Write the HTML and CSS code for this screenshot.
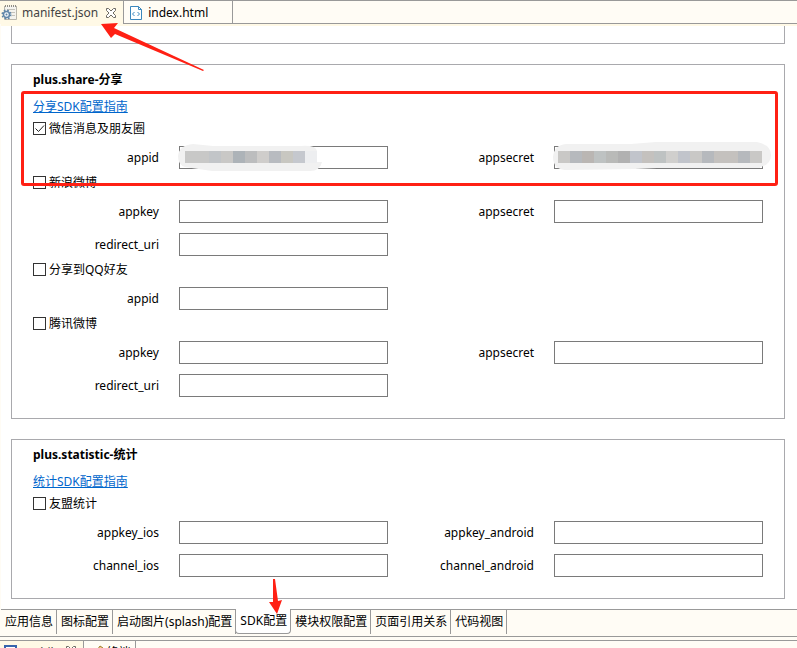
FILE: index.html
```html
<!DOCTYPE html>
<html lang="zh-CN">
<head>
<meta charset="utf-8">
<title>manifest.json</title>
<link rel="stylesheet" href="styles.css">
</head>
<body>
<div class="editor">
  <nav class="file-tabs">
    <button class="file-tab active" type="button">
      <svg class="file-icon" width="18" height="18" viewBox="0 0 18 18"><path d="M4.500 2v13.500h12V2" fill="#f4f3ee" stroke="#b9b6ab"/><path d="M5 2h11" stroke="#8f8d86" stroke-width="2" stroke-dasharray="1 1"/><path d="M7 5.500h8M11 8.500h4M12 11.500h3" stroke="#c4c2ba" fill="none"/><circle cx="6.500" cy="10.500" r="3" fill="#f4f8fa" stroke="#5f86a8" stroke-width="1.500"/><circle cx="6.500" cy="10.500" r="4.300" fill="none" stroke="#5f86a8" stroke-width="1.500" stroke-dasharray="1.700 1.700"/><circle cx="6.500" cy="10.500" r="1" fill="#5f86a8"/></svg>
      <span>manifest.json</span>
      <svg class="close-icon" width="12" height="12" viewBox="0 0 12 12"><path d="M1.500 1.500h2L6 4l2.500-2.500h2v2L8 6l2.500 2.500v2h-2L6 8l-2.500 2.500h-2v-2L4 6 1.500 3.500z" fill="#fff" stroke="#6c6a63"/></svg>
    </button>
    <button class="file-tab" type="button">
      <svg class="html-icon" width="12" height="14" viewBox="0 0 12 14"><path d="M.5.500h8l3 3v10H.5z" fill="#fff" stroke="#3b87bd"/><path d="M8.500.500v3h3M4.500 6 2.500 8l2 2M7.500 6l2 2-2 2" fill="none" stroke="#3b87bd"/></svg>
      <span>index.html</span>
    </button>
  </nav>

  <main class="page">
    <section class="group previous"></section>

    <section class="group">
      <h2>plus.share-分享</h2>
      <a class="guide" href="#share">分享SDK配置指南</a>
      <label class="check"><input type="checkbox" checked>微信消息及朋友圈</label>
      <div class="fields">
        <label for="wx-id">appid</label>
        <div class="control"><input id="wx-id" type="text">
          <svg class="smudge" width="146" height="30" viewBox="0 0 146 30"><path d="M1 14Q2 3 16 2l20 2h88q15-1 16 5v11h5q-2 9-12 9H35L8 25Q1 23 1 14z" fill="#f1f1f1"/><path d="M8 9h24v12H8z" fill="#c8c8c7"/><path d="M32 9h12v12H32z" fill="#c2c5c8"/><path d="M44 9h12v12H44z" fill="#c9c8c6"/><path d="M56 9h12v12H56z" fill="#adb3b8"/><path d="M68 9h12v12H68z" fill="#bcbdbe"/><path d="M80 9h12v12H80z" fill="#cfcdcb"/><path d="M92 9h12v12H92z" fill="#b8bbc0"/><path d="M104 9h12v12h-12z" fill="#c8c7c1"/><path d="M116 9h12v12h-12z" fill="#c5c8ce"/><path d="M128 9h12v12h-12z" fill="#edeef0"/></svg>
        </div>
        <label for="wx-secret">appsecret</label>
        <div class="control"><input id="wx-secret" type="text">
          <svg class="smudge" width="220" height="30" viewBox="0 0 220 30"><path d="M1 15Q2 3 14 2h65l25-2 92-1q23 1 23 14 0 10-11 12v1H105l-22 1-70 1Q1 27 1 15z" fill="#f1f1f1"/><path d="M6 9h12v12H6zM138 9h12v12h-12zM198 9h12v12h-12z" fill="#c9c8c6"/><path d="M18 9h12v12H18zM150 9h12v12h-12zM186 9h12v12h-12z" fill="#b6b9bd"/><path d="M30 9h12v12H30z" fill="#bab6b3"/><path d="M42 9h12v12H42zM102 9h12v12h-12z" fill="#bec2c2"/><path d="M54 9h12v12H54z" fill="#b9bab8"/><path d="M66 9h12v12H66z" fill="#b1b1b1"/><path d="M78 9h12v12H78zM126 9h12v12h-12z" fill="#c1c4cb"/><path d="M90 9h12v12H90zM162 9h24v12h-24z" fill="#c4c1be"/><path d="M114 9h12v12h-12z" fill="#d0cfcd"/></svg>
        </div>
      </div>
      <label class="check"><input type="checkbox">新浪微博</label>
      <div class="fields">
        <label for="sina-key">appkey</label><input id="sina-key" type="text">
        <label for="sina-secret">appsecret</label><input id="sina-secret" type="text">
        <label for="sina-uri">redirect_uri</label><input id="sina-uri" type="text">
      </div>
      <label class="check"><input type="checkbox">分享到QQ好友</label>
      <div class="fields">
        <label for="qq-id">appid</label><input id="qq-id" type="text">
      </div>
      <label class="check"><input type="checkbox">腾讯微博</label>
      <div class="fields">
        <label for="tx-key">appkey</label><input id="tx-key" type="text">
        <label for="tx-secret">appsecret</label><input id="tx-secret" type="text">
        <label for="tx-uri">redirect_uri</label><input id="tx-uri" type="text">
      </div>
      <div class="highlight"></div>
    </section>

    <section class="group">
      <h2>plus.statistic-统计</h2>
      <a class="guide" href="#statistic">统计SDK配置指南</a>
      <label class="check"><input type="checkbox">友盟统计</label>
      <div class="fields">
        <label for="key-ios">appkey_ios</label><input id="key-ios" type="text">
        <label for="key-android">appkey_android</label><input id="key-android" type="text">
        <label for="channel-ios">channel_ios</label><input id="channel-ios" type="text">
        <label for="channel-android">channel_android</label><input id="channel-android" type="text">
      </div>
    </section>
  </main>

  <nav class="page-tabs">
    <button type="button">应用信息</button>
    <button type="button">图标配置</button>
    <button type="button">启动图片(splash)配置</button>
    <button type="button" class="active">SDK配置
      <svg class="arrow-down" width="14" height="36" viewBox="0 0 14 36"><path d="M5 0h2l3 22 4-1-5 14L1 23l4 0z" fill="#ff2014"/></svg>
    </button>
    <button type="button">模块权限配置</button>
    <button type="button">页面引用关系</button>
    <button type="button">代码视图</button>
  </nav>
  <svg class="arrow-tab" width="104" height="50" viewBox="0 0 104 50"><path d="M0 1 17 0l-4 5 90 42-1 1L14 11l-4 4z" fill="#ff2014"/></svg>
</div>
<div class="dock">
  <button class="dock-tab active" type="button"><svg width="13" height="12" viewBox="0 0 13 12"><path d="M1 1h11v10H1z" fill="#fff" stroke="#3764ac" stroke-width="2"/></svg><span>Mobile</span><svg class="close-icon" width="12" height="12" viewBox="0 0 12 12"><path d="M1.500 1.500h2L6 4l2.500-2.500h2v2L8 6l2.500 2.500v2h-2L6 8l-2.500 2.500h-2v-2L4 6 1.500 3.500z" fill="#fff" stroke="#6c6a63"/></svg></button>
  <button class="dock-tab second" type="button"><svg width="10" height="12" viewBox="0 0 10 12"><path d="M1 8 6 1l3 2-5 8z" fill="#f2cf7c" stroke="#a17b34"/></svg><span>终端</span></button>
</div>
</body>
</html>
```
FILE: styles.css
```css
* { box-sizing: border-box; }
body {
  margin: 0;
  height: 100vh;
  overflow: hidden;
  background: #fffcf5;
  color: #000;
  font: 12px/16px "Noto Sans", "Noto Sans CJK SC", sans-serif;
}
button {
  font: inherit;
  color: inherit;
  background: none;
  border: 0;
  padding: 0;
  white-space: nowrap;
}
.editor { position: relative; border-bottom: 1px solid #999; }
.file-tabs {
  display: flex;
  height: 24px;
  border-top: 1px solid #999;
  border-bottom: 1px solid #999;
}
.file-tab {
  display: flex;
  align-items: center;
  gap: 6px;
  padding: 1px 24px 0 6px;
  border-right: 1px solid #999;
}
.file-tab.active {
  height: 23px;
  gap: 7px;
  padding: 0 6px 0 0;
  background: #fff9e6;
  color: #444;
}
.file-icon { margin-right: -3px; }
.page {
  margin-left: 1px;
  padding: 0 12px 10px 10px;
  border-top: 2px solid #fff9e6;
  background: #fff;
}
.group {
  position: relative;
  margin-bottom: 20px;
  padding: 5px 21px 21px;
  border: 1px solid #a9a9ad;
}
.group:last-child { margin-bottom: 0; }
.group.previous { padding: 0; height: 18px; border-top: 0; }
h2 { margin: 0 0 9px; font-size: 12px; line-height: 20px; font-weight: 700; }
.guide { display: block; width: max-content; margin-bottom: 5px; color: #0066cc; }
.check { display: flex; align-items: center; gap: 3px; width: max-content; height: 17px; }
.check input {
  appearance: none;
  width: 13px;
  height: 13px;
  margin: 0;
  border: 1px solid #333;
  background: #fff;
}
.check input:checked {
  background: #fff url("data:image/svg+xml,%3Csvg xmlns='http://www.w3.org/2000/svg' viewBox='0 0 11 11'%3E%3Cpath d='M1.500 5.500 4.500 8.500 10 2.500' fill='none' stroke='%23222'/%3E%3C/svg%3E");
}
.fields {
  display: grid;
  grid-template-columns: 126px 1fr 126px 1fr;
  gap: 10px 20px;
  align-items: center;
  margin: 9px 0 5px;
}
.fields:last-child, .fields:nth-last-child(2) { margin-bottom: 0; }
.fields label { text-align: right; }
.fields input {
  display: block;
  width: 100%;
  min-width: 0;
  height: 23px;
  border: 1px solid #7a7a7a;
  background: #fff;
  font: inherit;
}
.control { position: relative; }
.smudge { position: absolute; left: -2px; top: -4px; }
.highlight {
  position: absolute;
  left: 9px;
  right: 6px;
  top: 26px;
  height: 95px;
  border: 3px solid #ff2014;
  border-radius: 3px;
}
.page-tabs { display: flex; height: 27px; margin-left: 1px; border-top: 1px solid #999; }
.page-tabs button {
  position: relative;
  height: 24px;
  padding: 0 3px 1px 4px;
  border-right: 1px solid #999;
}
.page-tabs .active {
  margin: -1px 0 0 -1px;
  height: 25px;
  padding-top: 1px;
  background: #fff;
  border: solid #999;
  border-width: 0 1px 1px;
  border-radius: 0 0 4px 4px;
}
.arrow-down { position: absolute; left: 32px; top: -30px; }
.arrow-tab { position: absolute; left: 101px; top: 23px; }
.dock { display: flex; height: 30px; margin-top: 3px; border-top: 1px solid #999; }
.dock-tab { display: flex; align-items: flex-start; gap: 5px; padding: 4px 6px 0 4px; border-right: 1px solid #999; }
.dock-tab.active { background: #fff9e6; color: #444; }
.dock-tab.second { gap: 2px; padding: 4px 4px 0 10px; }
```
